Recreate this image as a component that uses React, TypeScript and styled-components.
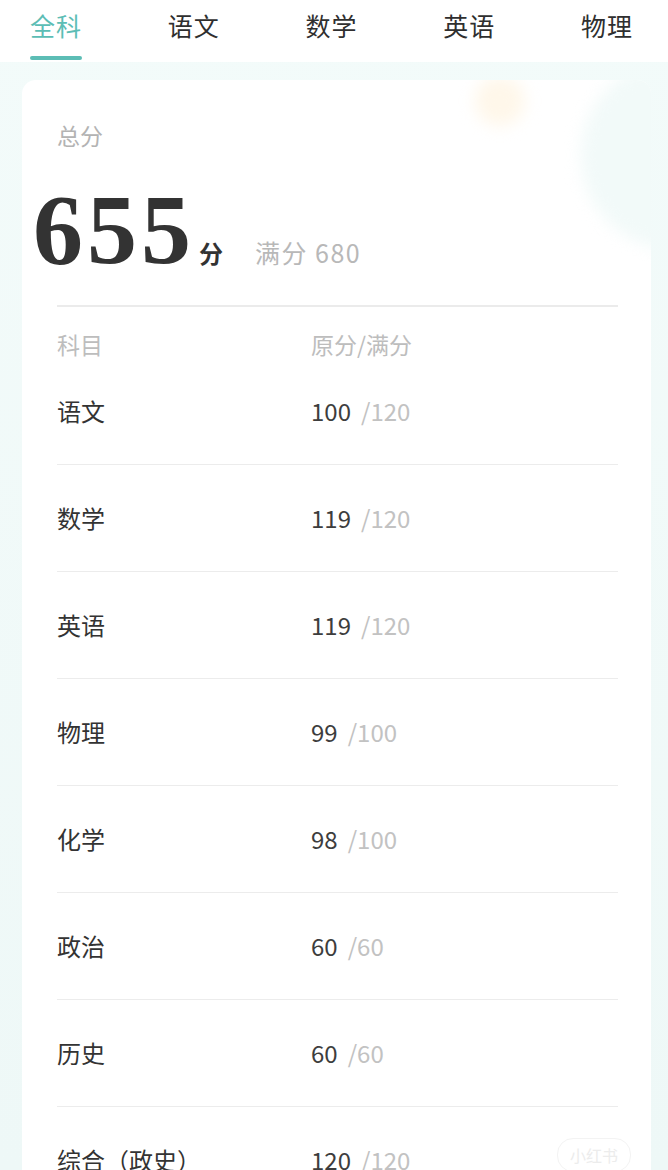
import React from "react";
import styled, { createGlobalStyle } from "styled-components";

const GlobalStyle = createGlobalStyle`
  html, body {
    margin: 0;
    padding: 0;
    background: #eff9f8;
    font-family: "Noto Sans CJK SC", "Noto Sans", sans-serif;
  }
  #root {
    min-height: 1170px;
  }
`;

// Styled
const Page = styled.div`
  width: 668px;
  height: 1170px;
  overflow: hidden;
  background: linear-gradient(180deg, #f3fbfa 0%, #eef8f7 100%);
`;

const TabBar = styled.nav`
  height: 62px;
  background: #ffffff;
  display: flex;
  justify-content: space-between;
  padding: 0 35px 0 30px;
  box-sizing: border-box;
`;

const Tab = styled.div<{ $active?: boolean }>`
  display: flex;
  flex-direction: column;
  align-items: center;
  font-size: 25px;
  line-height: 28px;
  padding-top: 11px;
  letter-spacing: 1px;
  color: ${({ $active }) => ($active ? "#5cbdb5" : "#2f2f2f")};
  &::after {
    content: "";
    display: block;
    width: 52px;
    height: 4px;
    margin-top: 17px;
    border-radius: 2px;
    background: ${({ $active }) => ($active ? "#5cbdb5" : "transparent")};
  }
`;

const Card = styled.section`
  position: relative;
  margin: 18px 17px 0 22px;
  background: #ffffff;
  border-radius: 14px 14px 0 0;
  overflow: hidden;
  padding: 0 33px 0 35px;
  height: 1100px;
`;

const Glow = styled.div<{ $color: string; $size: number; $top: number; $right: number }>`
  position: absolute;
  top: ${({ $top }) => $top}px;
  right: ${({ $right }) => $right}px;
  width: ${({ $size }) => $size}px;
  height: ${({ $size }) => $size}px;
  border-radius: 50%;
  background: ${({ $color }) => $color};
  filter: blur(8px);
`;

const Content = styled.div`
  position: relative;
`;

const Label = styled.div`
  padding-top: 40px;
  font-size: 23px;
  line-height: 30px;
  color: #b3b3b3;
`;

const ScoreLine = styled.div`
  display: flex;
  align-items: baseline;
  margin-left: -24px;
  margin-top: 32px;
  padding-bottom: 27px;
`;

const Divider = styled.div`
  height: 1.5px;
  background: #ebebeb;
`;

const BigScore = styled.span`
  font-family: "Liberation Serif", "Times New Roman", serif;
  font-weight: 700;
  font-size: 100px;
  line-height: 96px;
  color: #333333;
  letter-spacing: 4px;
`;

const Unit = styled.span`
  font-size: 24px;
  font-weight: 700;
  color: #333333;
  margin-left: 4px;
`;

const FullMark = styled.span`
  font-size: 25px;
  color: #b8b8b8;
  margin-left: 32px;
  letter-spacing: 1.5px;
`;

const HeadRow = styled.div`
  display: flex;
  height: 51px;
  padding-top: 22px;
  box-sizing: border-box;
  font-size: 23px;
  line-height: 30px;
  color: #bdbdbd;
`;

const Row = styled.div`
  display: flex;
  align-items: center;
  height: 107px;
  box-sizing: border-box;
  border-bottom: 1.5px solid #ececec;
  font-size: 24px;
`;

const Subject = styled.span<{ $muted?: boolean }>`
  width: 254px;
  flex-shrink: 0;
  color: ${({ $muted }) => ($muted ? "#bdbdbd" : "#333333")};
`;

const Got = styled.span`
  color: #3d3d3d;
  font-size: 24px;
`;

const Total = styled.span`
  color: #c2c2c2;
  font-size: 24px;
  margin-left: 10px;
`;

const Watermark = styled.div`
  position: absolute;
  right: 20px;
  bottom: 8px;
  padding: 4px 12px;
  border-radius: 16px;
  border: 1px solid #f3f3f3;
  font-size: 16px;
  color: #ececec;
`;

const tabs = ["全科", "语文", "数学", "英语", "物理"];

const scores = [
  { name: "语文", got: 100, total: 120 },
  { name: "数学", got: 119, total: 120 },
  { name: "英语", got: 119, total: 120 },
  { name: "物理", got: 99, total: 100 },
  { name: "化学", got: 98, total: 100 },
  { name: "政治", got: 60, total: 60 },
  { name: "历史", got: 60, total: 60 },
  { name: "综合（政史）", got: 120, total: 120 },
];

const App = () => {
  return (
    <Page>
      <GlobalStyle />
      <TabBar>
        {tabs.map((t, i) => (
          <Tab key={t} $active={i === 0}>
            {t}
          </Tab>
        ))}
      </TabBar>
      <Card>
        <Glow $color="#fff7ea" $size={50} $top={-4} $right={126} />
        <Glow $color="#f2faf9" $size={190} $top={-20} $right={-120} />
        <Content>
          <Label>总分</Label>
          <ScoreLine>
            <BigScore>655</BigScore>
            <Unit>分</Unit>
            <FullMark>满分 680</FullMark>
          </ScoreLine>
          <Divider />
          <HeadRow>
            <Subject $muted>科目</Subject>
            <span>原分/满分</span>
          </HeadRow>
          {scores.map((s) => (
            <Row key={s.name}>
              <Subject>{s.name}</Subject>
              <Got>{s.got}</Got>
              <Total>/{s.total}</Total>
            </Row>
          ))}
        </Content>
        <Watermark>小红书</Watermark>
      </Card>
    </Page>
  );
};

export default App;
